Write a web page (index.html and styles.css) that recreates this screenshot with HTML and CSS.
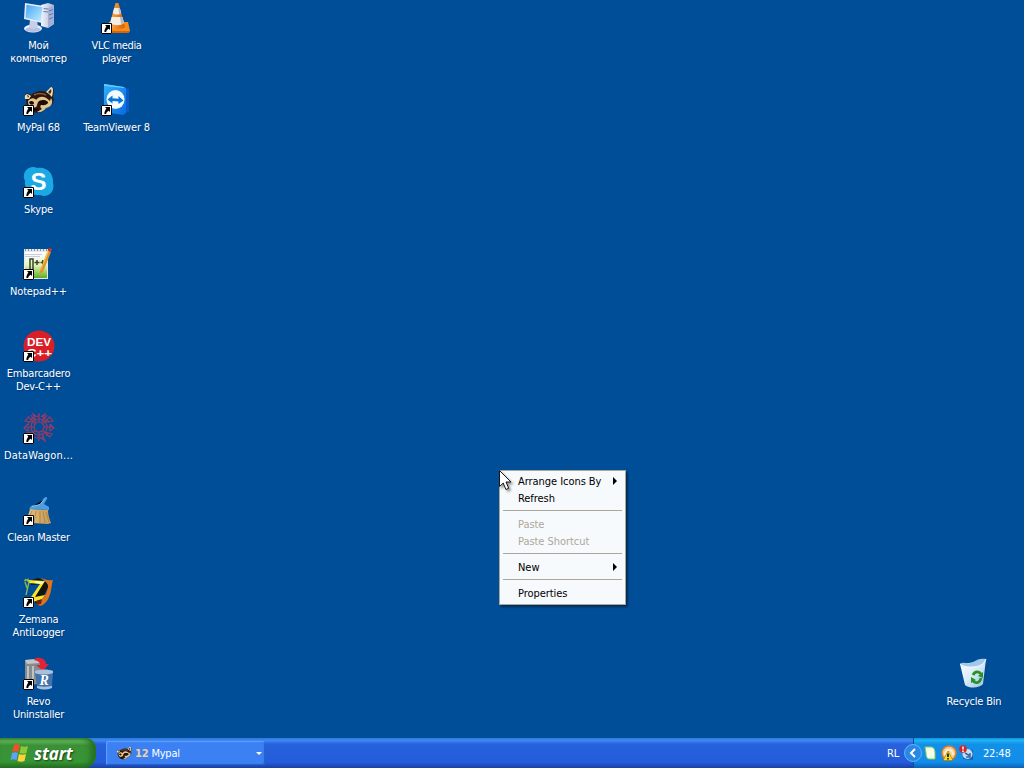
FILE: index.html
```
<!DOCTYPE html>
<html lang="ru">
<head>
    <meta charset="UTF-8">
    <title>Desktop</title>
    <link rel="stylesheet" href="styles.css">
</head>
<body>
    <svg class="defs">
        <symbol id="shortcut" viewBox="0 0 11 11">
            <path fill="#fff" d="M0 0h11v11H0z"/>
            <path fill="none" stroke="#000" d="M.5.5h10v10H.5z"/>
            <path fill="#000" d="M4 2h5v5L7.700 5.700C6 6.600 5.300 7.500 5.200 9H3.400C3.200 7 4.200 5.200 5.400 3.500z"/>
        </symbol>
        <symbol id="raccoon" viewBox="0 0 32 32">
            <path fill="#2c1710" d="M3 14C1 10 3 8 8 11c5-4 10-5 15-3l6-5c2 0 2 6 1 10 2 6-1 9-7 11-4 5-8 6-12 4C5 27 3 20 3 14z"/>
            <path fill="#f3deb0" d="M2 15c-1-5 2-6 6-3l-2 3zM23 8l5-5c3 0 2 6 1 10l-3-3z"/>
            <path fill="#4a2a1c" d="M25 8l3-3c1 2 0 4-1 5zM4 11l2 1-1 2z"/>
            <path fill="#e5c58f" d="M5 17c3-4 7-3 8-1 4-5 9-4 14 1l1-3c3 5 0 9-5 10-2 3-6 5-9 4l5-3c-2-1-2-3-1-4 4 0 7-1 7-3-4-3-8-2-10 0l-2 6H9c-3-1-4-4-4-7z"/>
            <path fill="#1b0d09" d="M6 18c2-2 5-1 5 1s-4 3-5-1zM16 18c4-3 8-2 9 1-3 3-7 3-9 0zM10 24c3-2 6 0 5 2s-4 2-5-2z"/>
            <path fill="none" stroke="#8b5b35" stroke-width="1.500" d="M11 11c4-2 8-2 12 0"/>
        </symbol>
        <linearGradient id="gScreen" x2="1" y2="1"><stop stop-color="#45a5f5"/><stop offset="1" stop-color="#c2efff"/></linearGradient>
        <linearGradient id="gTower" x2="1"><stop stop-color="#f3f4fc"/><stop offset="1" stop-color="#a8b4d8"/></linearGradient>
        <linearGradient id="gCone" x2="1"><stop stop-color="#ffb24d"/><stop offset="1" stop-color="#dc5a06"/></linearGradient>
        <linearGradient id="gTeam" x2="1" y2="1"><stop stop-color="#2fb0fb"/><stop offset="1" stop-color="#0869e2"/></linearGradient>
        <linearGradient id="gPad" y2="1" x2="0"><stop stop-color="#fff"/><stop offset=".5" stop-color="#e6f5bd"/><stop offset="1" stop-color="#5fae1c"/></linearGradient>
        <linearGradient id="gBrush" x2="1"><stop stop-color="#e5bf77"/><stop offset="1" stop-color="#c39a58"/></linearGradient>
        <linearGradient id="gBin" x2="1" y2="1"><stop stop-color="#fff"/><stop offset=".5" stop-color="#d9ecfa"/><stop offset="1" stop-color="#8fbfe9"/></linearGradient>
    </svg>

    <main class="desktop">
        <div class="icon">
            <svg class="picture" viewBox="0 0 32 32">
                <path fill="url(#gTower)" d="M18 3l7-2 6 2v19l-6 4-7-2z"/>
                <path fill="#a3afd5" d="M25 6l6-3v19l-6 4z"/>
                <path stroke="#6379ad" d="M20 6.500l5 .5M20 9.500l5 .5M26 9l4-1.500M26 13l4-1.500M26 17l4-1.500"/>
                <ellipse cx="10" cy="26.500" rx="9" ry="4" fill="#eef1fb"/>
                <ellipse cx="10" cy="27.500" rx="7.500" ry="2.600" fill="#b4c0e3"/>
                <path fill="#c6cee8" d="M7 18h7l1 7-4 2-5-1z"/>
                <path fill="#e8ecfa" d="M2 1l19 3-2 17L1 17z"/>
                <path fill="url(#gScreen)" d="M3.500 2.800L19.500 5.300 17.500 19.500 2.500 15.800z"/>
            </svg>
            <span class="label">Мой<br>компьютер</span>
        </div>
        <div class="icon">
            <svg class="picture" viewBox="0 0 32 32">
                <path fill="#f78d19" d="M8 20h19l2 9-2 2H6l-1-2z"/>
                <path fill="#d96307" d="M5 29h24l-2 2H6z"/>
                <path fill="url(#gCone)" d="M14.500 1h3L24 25c-3 3-13 3-16 0z"/>
                <path fill="#f1eee8" d="M13.200 6h5.500l1.500 5c-2 2-6 2-8.500 0zM10.700 15h10.700l1.700 6c-4 3-10 3-14 0z"/>
                <path fill="#bcb9b4" d="M17.500 6h1.200l1.500 5-2 1zM19 15h2.400l1.700 6-3 1.500z"/>
                <use href="#shortcut" y="21" width="11" height="11"/>
            </svg>
            <span class="label tight">VLC media<br>player</span>
        </div>
        <div class="icon">
            <svg class="picture" viewBox="0 0 32 32">
                <use href="#raccoon" width="32" height="32"/>
                <use href="#shortcut" y="21" width="11" height="11"/>
            </svg>
            <span class="label">MyPal 68</span>
        </div>
        <div class="icon">
            <svg class="picture" viewBox="0 0 32 32">
                <path fill="#075bc5" d="M22 3l6 2v22l-6 4z"/>
                <path fill="url(#gTeam)" d="M3 0l20 3 2 1v25l-3 2-19-3z"/>
                <path fill="#66caff" d="M3 0l20 3v1L3 2z"/>
                <ellipse cx="14.500" cy="15.500" rx="9" ry="9.500" fill="#f4fbff"/>
                <path fill="#0873d8" d="M6.500 15.500l5-4v2.800l6 .5V12l5 4.500-5 3.500v-2.500l-6-.5v2.500z"/>
                <use href="#shortcut" y="21" width="11" height="11"/>
            </svg>
            <span class="label">TeamViewer 8</span>
        </div>
        <div class="icon">
            <svg class="picture" viewBox="0 0 32 32">
                <path fill="#1ba9e6" d="M9 1c2 0 4 0 5 1 9-2 17 5 16 15 2 6-2 13-9 13-2 0-3-1-5-1C7 30 1 23 2 15-1 9 2 2 9 1z"/>
                <text class="skype-s" x="15.500" y="24" text-anchor="middle">S</text>
                <use href="#shortcut" y="21" width="11" height="11"/>
            </svg>
            <span class="label">Skype</span>
        </div>
        <div class="icon"></div>
        <div class="icon">
            <svg class="picture" viewBox="0 0 32 32">
                <path fill="#e4e8e9" d="M1 1h24v30H1z"/>
                <path fill="url(#gPad)" d="M2 4h22v26H2z"/>
                <path stroke="#88919c" stroke-dasharray="1 2" stroke-width="2" d="M2 2h22"/>
                <path stroke="#ccc5ed" d="M2 6.500h17M2 8.500h15"/>
                <path fill="none" stroke="#33462e" stroke-width="1.500" d="M7 21V11h3v10M11.500 14.500h5M14 12v5M17.500 14.500h4.500M19.800 12v5"/>
                <path fill="#e0952b" d="M25 2l3 2-8 20-3 2v-4z"/>
                <path fill="#f9ca61" d="M25 2l1 1-8 19-1 1z"/>
                <path fill="#d23530" d="M26 0l3 1-1 3-3-1z"/>
                <use href="#shortcut" y="21" width="11" height="11"/>
            </svg>
            <span class="label">Notepad++</span>
        </div>
        <div class="icon"></div>
        <div class="icon">
            <svg class="picture" viewBox="0 0 32 32">
                <circle cx="16" cy="16" r="15.500" fill="#d81f28"/>
                <text class="dev" x="4" y="15.500" textLength="24" lengthAdjust="spacingAndGlyphs">DEV</text>
                <text class="dev" x="4" y="26.500" textLength="25" lengthAdjust="spacingAndGlyphs">C++</text>
                <use href="#shortcut" y="21" width="11" height="11"/>
            </svg>
            <span class="label">Embarcadero<br>Dev-C++</span>
        </div>
        <div class="icon"></div>
        <div class="icon">
            <svg class="picture" viewBox="0 0 32 32">
                <g fill="none" stroke="#963b63" stroke-width="1.200">
                    <circle cx="16" cy="15" r="5"/>
                    <circle cx="16" cy="15" r="8"/>
                    <circle cx="16" cy="15" r="11" stroke-dasharray="4 2"/>
                    <path d="M16 10V1M16 20v9M11 15H1M21 15h9M12.500 11.500L5 5M19.500 11.500L27 5M19.500 18.500L27 25M12.500 18.500L5 25M13 10l-3-8 4 3M19 10l3-8-4 3M10 10l-8-1 4-5M22 10l8-1-4-5M22 20l7 2-3 4M19 21l3 8-4-3M10 20l-7 1M5 12l-4 4 4 3M27 12l4 4-4 3M8 3l3 5M24 3l-3 5"/>
                </g>
                <use href="#shortcut" y="21" width="11" height="11"/>
            </svg>
            <span class="label wide">DataWagon...</span>
        </div>
        <div class="icon"></div>
        <div class="icon">
            <svg class="picture" viewBox="0 0 32 32">
                <path fill="url(#gBrush)" d="M7 15l18 1c0 4 1 8 3 13l-3 1-16-1-6-4c2-3 3-6 4-10z"/>
                <path stroke="#a47b40" stroke-width=".7" d="M9 17l-3 6M13 17l-2 12M17 17v12M20 17l2 12M23 18l3 10"/>
                <path fill="#4b9ee1" d="M8 12l9-3 4-5c2-2 4-1 3 1l-3 5 5 3v3L6 15z"/>
                <path stroke="#92ccf4" d="M9 12.500l8-2 4-5"/>
                <use href="#shortcut" y="21" width="11" height="11"/>
            </svg>
            <span class="label">Clean Master</span>
        </div>
        <div class="icon"></div>
        <div class="icon">
            <svg class="picture" viewBox="0 0 32 32">
                <path fill="#df751b" d="M13 0c7 3 12 5 17 4-2 5-1 18-9 24-3 3-6 2-8-1 7-3 12-10 12-18-2-4-6-7-12-9z"/>
                <path fill="#17140a" d="M9 4l6-2c6 2 10 5 10 9l-6 12-5 5-5-4L19 8 8 9z"/>
                <path fill="#f5e52d" d="M5 4l17 1-10 16 10-2-3 4-12 4-1-3L17 8 6 7z"/>
                <path fill="#fffbbf" d="M12 5l9 1-2 2-7-1z"/>
                <path fill="none" stroke="#8fbb48" stroke-width="1.300" d="M2 3l4 3-3 13M1 5l5-2M4 12l-2-6"/>
                <path fill="#7a1e18" d="M13 25l6-1-1 4-4 1z"/>
                <use href="#shortcut" y="21" width="11" height="11"/>
            </svg>
            <span class="label">Zemana<br>AntiLogger</span>
        </div>
        <div class="icon"></div>
        <div class="icon">
            <svg class="picture" viewBox="0 0 32 32">
                <path fill="#858b8e" d="M2 2l12-1 4 4v20l-13 3-3-4z"/>
                <path fill="#c4c7c9" d="M2 2l12-1 3 4-13 1z"/>
                <path stroke="#bdc2c3" stroke-width="2" d="M5 8v17M10 8v14"/>
                <path fill="#dd2536" d="M13 0c6-1 10 2 10 6h3l-6 7-7-6h4c0-3-2-4-6-5z"/>
                <path fill="#4172ac" d="M12 14h18l-1 15c-4 3-11 3-15 0z"/>
                <path fill="#a8c0da" d="M12 13c5-2 14-2 18 0v2c-5 2-13 2-18 0z"/>
                <path fill="#a9c0dc" d="M14 28c5 1 10 1 15 0v2c-5 2-10 2-15 0z"/>
                <text class="revo" x="21" y="27" text-anchor="middle">R</text>
                <use href="#shortcut" y="21" width="11" height="11"/>
            </svg>
            <span class="label">Revo<br>Uninstaller</span>
        </div>
    </main>

    <div class="icon recycle">
        <svg class="picture" viewBox="0 0 32 32">
            <path fill="#173f73" opacity=".35" d="M26 9l4-4-4 23-9 3z"/>
            <path fill="url(#gBin)" d="M2 6l17-2 9-3-3 25c-3 4-13 5-18 1z"/>
            <path fill="#9fc8e9" d="M2 6c4-3 8 1 13-2s8-4 13-3c-2 6-8 8-14 8C8 9 4 9 2 6z"/>
            <path fill="none" stroke="#f5fbff" d="M2 6c4 3 8 3 12 3 6 0 12-2 14-8"/>
            <path fill="none" stroke="#2b9222" stroke-width="2.800" d="M15 17c2-4 6-4 8-1M23 20c-1 5-5 6-8 3"/>
            <path fill="#2b9222" d="M20 18l5-4v6zM13 25v-6l5 3z"/>
        </svg>
        <span class="label">Recycle Bin</span>
    </div>

    <div class="menu">
        <div class="item">Arrange Icons By<span class="arrow"></span></div>
        <div class="item">Refresh</div>
        <div class="separator"></div>
        <div class="item disabled">Paste</div>
        <div class="item disabled">Paste Shortcut</div>
        <div class="separator"></div>
        <div class="item">New<span class="arrow"></span></div>
        <div class="separator"></div>
        <div class="item">Properties</div>
    </div>

    <svg class="cursor" viewBox="0 0 14 22">
        <path fill="#fff" stroke="#000" stroke-width=".9" d="M.5.500v16l3.700-3.500 2.700 6.500 2.800-1.200-2.700-6.300h5z"/>
    </svg>

    <footer class="taskbar">
        <button class="start">
            <svg class="flag" viewBox="0 0 20 20">
                <path fill="#ef5228" d="M4 2c2-1 4-1 6 0L8.500 9c-2-1-4-1-6.500 0z"/>
                <path fill="#8acb35" d="M11 3c2 1 5 1 7 0l-1.500 7c-2 1-5 1-7 0z"/>
                <path fill="#5da1fa" d="M2 10c2-1 4-1 6 0l-1.500 7c-2-1-4-1-6 0z"/>
                <path fill="#ffd33a" d="M9 11c2 1 5 1 7 0l-1.500 7c-2 1-5 1-7 0z"/>
            </svg>
            <span>start</span>
        </button>
        <div class="task">
            <svg class="task-icon" viewBox="0 0 32 32"><use href="#raccoon" width="32" height="32"/></svg>
            <b>12</b>
            <span>Mypal</span>
            <span class="down"></span>
        </div>
        <span class="language">RL</span>
        <div class="tray">
            <svg class="chevron" viewBox="0 0 18 18">
                <circle cx="9" cy="9" r="8.500" fill="#2b87e6" stroke="#63b4f5"/>
                <path fill="none" stroke="#fff" stroke-width="2" d="M11 5L7 9l4 4"/>
            </svg>
            <svg class="tray-icon" viewBox="0 0 16 16">
                <path fill="#f5ffe5" stroke="#80c965" d="M2 2h6c3 0 4 3 4 6v6H7c-3 0-4-2-4-6z"/>
            </svg>
            <svg class="tray-icon" viewBox="0 0 16 16">
                <circle cx="8" cy="8" r="7" fill="#f4cf9a" stroke="#e07a24" stroke-width="1.500"/>
                <path fill="none" stroke="#fff1d1" stroke-width="2" d="M4 10c0-7 8-7 8 0"/>
                <path fill="#ffdc20" stroke="#9d6c05" stroke-width=".6" d="M7 6l5 9.500H2z"/>
                <path stroke="#222" stroke-width="1.800" d="M7 8.500V12M7 13v1.500"/>
            </svg>
            <svg class="tray-icon" viewBox="0 0 16 16">
                <path fill="#1663bd" d="M6 4l8 1v10l-10-1z"/>
                <circle cx="8.500" cy="9" r="5" fill="#c8ddf1"/>
                <path fill="none" stroke="#3569a6" stroke-width="1.500" d="M6 8l5 3M11 8v4H7"/>
                <circle cx="4" cy="4" r="3.800" fill="#d92426"/>
                <path stroke="#fff" stroke-width="1.500" d="M4 1.500v3M4 5.500V7"/>
            </svg>
            <span class="clock">22:48</span>
        </div>
    </footer>
</body>
</html>
```

FILE: styles.css
```
body {
    margin: 0;
    width: 1024px;
    height: 768px;
    overflow: hidden;
    position: relative;
    display: flex;
    flex-direction: column;
    background: #004e98;
    font-family: "DejaVu Sans Condensed", "DejaVu Sans", sans-serif;
    font-stretch: condensed;
    font-size: 11px;
    letter-spacing: -0.2px;
}
.defs {
    position: absolute;
    width: 0;
    height: 0;
}
.desktop {
    height: 738px;
    display: grid;
    grid-template-columns: 78px 78px;
    grid-auto-rows: 82px;
}
.icon {
    display: flex;
    flex-direction: column;
    align-items: center;
    padding-top: 2px;
    width: 78px;
    box-sizing: border-box;
    color: #fff;
}
.picture {
    width: 32px;
    height: 32px;
    overflow: visible;
}
.label {
    margin-top: 5px;
    margin-right: 1px;
    line-height: 13px;
    text-align: center;
    white-space: nowrap;
    text-shadow: 1px 1px 1px #003a78;
}
.tight {
    letter-spacing: -0.35px;
}
.wide {
    letter-spacing: 0.2px;
}
.recycle {
    position: absolute;
    left: 935px;
    top: 656px;
}
.recycle .label {
    margin-right: 0;
}
.skype-s {
    font: bold 24px "Liberation Sans", sans-serif;
    fill: #fff;
}
.dev {
    font: bold 10px "Liberation Sans", sans-serif;
    letter-spacing: 0;
    fill: #fff;
}
.revo {
    font: italic bold 14px "Liberation Serif", serif;
    fill: #fff;
}
.menu {
    position: absolute;
    left: 499px;
    top: 470px;
    width: 127px;
    height: 135px;
    box-sizing: border-box;
    padding: 2px;
    border: 1px solid #aaa899;
    background: #f7fafd;
    box-shadow: 2px 2px 2px rgba(0, 0, 0, 0.45);
    color: #000;
    letter-spacing: -0.05px;
}
.item {
    display: flex;
    align-items: center;
    justify-content: space-between;
    height: 17px;
    padding: 0 6px 0 16px;
    white-space: nowrap;
}
.disabled {
    color: #aca899;
}
.arrow {
    margin-bottom: 1px;
    border: 4px solid transparent;
    border-left-color: #000;
    border-right: 0;
}
.separator {
    height: 1px;
    margin: 3px 1px 5px;
    background: #aca899;
}
.cursor {
    position: absolute;
    left: 499px;
    top: 470px;
    width: 14px;
    height: 22px;
    filter: drop-shadow(2px 2px 1px rgba(0, 0, 0, 0.4));
}
.taskbar {
    height: 30px;
    display: flex;
    align-items: center;
    color: #fff;
    background: linear-gradient(#2f76df, #3b8af4 8%, #2861dc 20%, #245ddb 80%, #1941a5);
}
.start {
    display: flex;
    align-items: center;
    gap: 4px;
    width: 96px;
    height: 30px;
    padding: 0 0 0 10px;
    border: 0;
    border-radius: 0 10px 12px 0;
    color: #fff;
    background: linear-gradient(#418f3d, #62b95b 10%, #3b9038 25%, #379635 80%, #246f22);
    box-shadow: inset -5px 0 6px #246f22;
    font: italic bold 17px "Open Sans", sans-serif;
    letter-spacing: -0.1px;
    text-shadow: 1px 1px 2px #173c10;
}
.flag {
    width: 20px;
    height: 20px;
}
.task {
    display: flex;
    align-items: center;
    width: 159px;
    height: 24px;
    margin-left: 10px;
    box-sizing: border-box;
    padding: 0 3px 0 10px;
    gap: 3px;
    border-radius: 2px;
    background: #3c81f3;
    box-shadow: inset 1px 1px 1px #62a0fa, inset -1px -1px 1px #2660c9;
}
.task b {
    color: #edd2a6;
}
.task-icon,
.tray-icon {
    width: 16px;
    height: 16px;
}
.down {
    margin-left: auto;
    border: 3px solid transparent;
    border-top-color: #fff;
    border-bottom: 0;
}
.language {
    margin-left: auto;
    padding-right: 14px;
}
.tray {
    display: flex;
    align-items: center;
    width: 111px;
    height: 30px;
    box-sizing: border-box;
    border-left: 1px solid #0b4fa5;
    background: linear-gradient(#1290e0, #1db5f4 8%, #1290e8 20%, #118ee9 80%, #0d62b5);
}
.chevron {
    flex-shrink: 0;
    width: 18px;
    height: 18px;
    margin-left: -10px;
    margin-right: 1px;
}
.tray-icon {
    flex-shrink: 0;
    margin-right: 2px;
}
.clock {
    margin-left: 6px;
}
```
